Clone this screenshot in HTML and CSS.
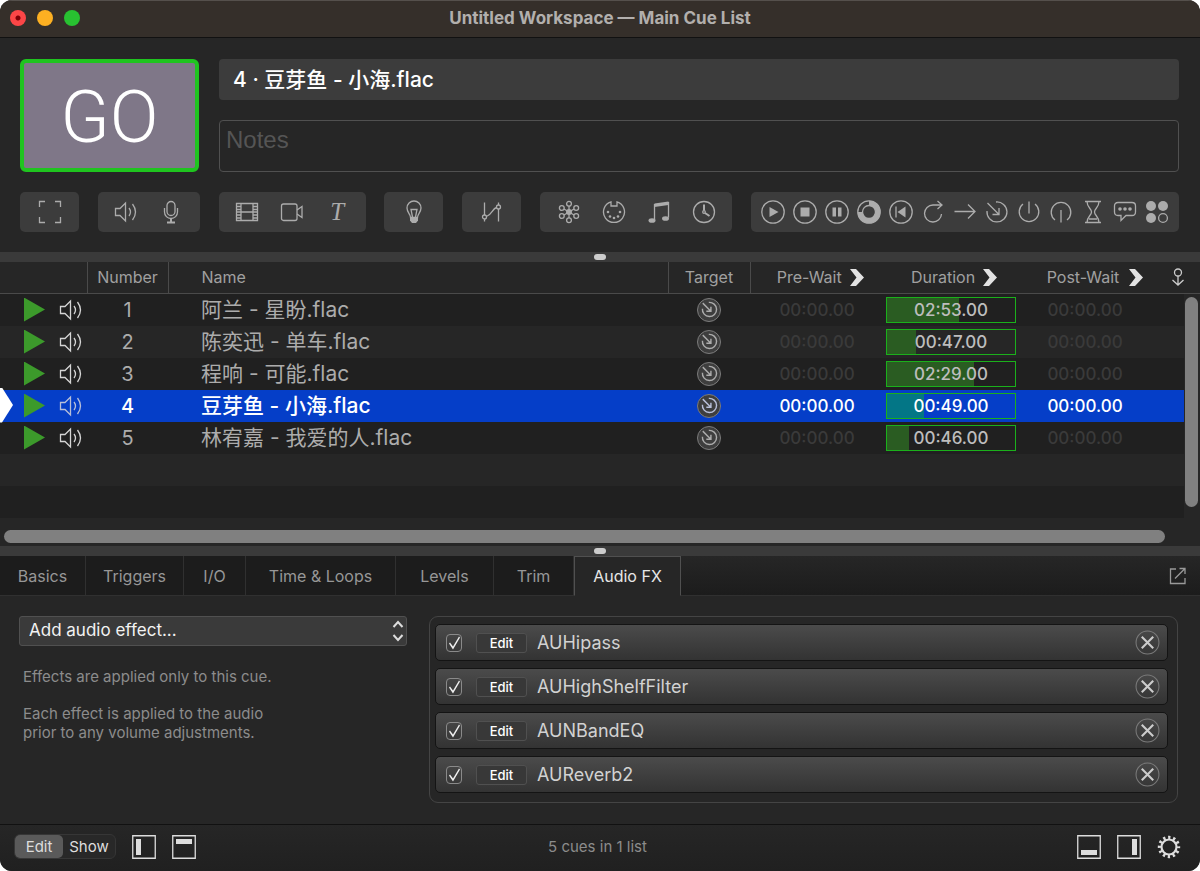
FILE: index.html
```html
<!DOCTYPE html>
<html lang="en">

<head>
    <meta charset="UTF-8">
    <meta name="viewport" content="width=device-width, initial-scale=1.0">
    <title>Untitled Workspace — Main Cue List</title>
    <link rel="stylesheet" href="styles.css">
</head>

<body>
    <!-- Icon sprite -->
    <svg class="sprite" aria-hidden="true">
        <symbol id="i-full" viewBox="0 0 24 24">
            <path d="M1.5 7V1.5H7M17 1.5h5.500V7M22.500 17v5.500H17M7 22.500H1.500V17" />
        </symbol>
        <symbol id="i-speaker" viewBox="0 0 24 24">
            <path d="M1.500 8.500H6L11.500 3v18L6 15.500H1.500zM15 8q3 4 0 8M18.500 4q6 8 0 16" />
        </symbol>
        <symbol id="i-mic" viewBox="0 0 24 24">
            <rect x="8" y="1.500" width="8" height="14" rx="4" />
            <path d="M5.500 8v4a6.500 6.500 0 0 0 13 0V8" />
            <path d="M12 18.500v3M8 22.500h8" stroke-width="2" />
        </symbol>
        <symbol id="i-film" viewBox="0 0 24 24">
            <path d="M1.500 3.500h21v17h-21zM6 3.500v17M18 3.500v17M6 12h12" />
            <path d="M1.500 6.500H6M1.500 9.500H6M1.500 12H6M1.500 15H6M1.500 18H6M18 6.500h4.500M18 9.500h4.500M18 12h4.500M18 15h4.500M18 18h4.500" />
        </symbol>
        <symbol id="i-camera" viewBox="0 0 24 24">
            <rect x="1.500" y="4" width="15.500" height="16.500" rx="2" />
            <path d="M17 10l5-3.500v11L17 14" />
        </symbol>
        <symbol id="i-bulb" viewBox="0 0 24 24">
            <path d="M8.500 17.500C8.500 14 5 12.500 5 8a7 7 0 0 1 14 0c0 4.500-3.500 6-3.500 9.500zM10.500 17L9 9.500h6L13.500 17" />
            <path class="solid" d="M8 17.500h8v3L14 23h-4l-2-2.500z" />
        </symbol>
        <symbol id="i-fade" viewBox="0 0 24 24">
            <path d="M4.500 2.500v12.500M4.500 19v2.500M18.500 2.500v2.500M18.500 9v12.500M6.500 16.500c5-1.500 6-8 10-9" />
            <circle cx="4.500" cy="17" r="2" />
            <circle cx="18.500" cy="7" r="2" />
        </symbol>
        <symbol id="i-network" viewBox="0 0 24 24">
            <circle class="solid" cx="12" cy="12" r="3" />
            <path d="M12 6v12M7 9l10 6M7 15l10-6" />
            <circle cx="12" cy="3.800" r="2.400" />
            <circle cx="12" cy="20.200" r="2.400" />
            <circle cx="4.800" cy="8" r="2.400" />
            <circle cx="19.200" cy="8" r="2.400" />
            <circle cx="4.800" cy="16" r="2.400" />
            <circle cx="19.200" cy="16" r="2.400" />
        </symbol>
        <symbol id="i-midi" viewBox="0 0 24 24">
            <path d="M9 1.900a10.500 10.500 0 1 0 6 0V6H9z" />
            <g class="solid">
                <circle cx="6" cy="12" r="1.300" />
                <circle cx="18" cy="12" r="1.300" />
                <circle cx="8" cy="16.500" r="1.300" />
                <circle cx="16" cy="16.500" r="1.300" />
                <circle cx="12" cy="18" r="1.300" />
            </g>
        </symbol>
        <symbol id="i-music" viewBox="0 0 24 24">
            <path class="solid" d="M7.500 3.500l14-2v3.500l-14 2z" />
            <path d="M7.500 4v16M21.500 2v15.500" />
            <ellipse class="solid" cx="5" cy="20.500" rx="3.500" ry="2.300" />
            <ellipse class="solid" cx="18.500" cy="18.500" rx="3.500" ry="2.300" />
        </symbol>
        <symbol id="i-clock" viewBox="0 0 24 24">
            <circle cx="12" cy="12" r="10.500" />
            <circle cx="12" cy="12" r="1.300" />
            <path d="M12 4.500v6M13 13l4.500 3" stroke-width="2" />
        </symbol>
        <symbol id="i-play" viewBox="0 0 24 24">
            <circle cx="12" cy="12" r="11.200" />
            <path class="solid" d="M8.500 7l9 5-9 5z" />
        </symbol>
        <symbol id="i-stop" viewBox="0 0 24 24">
            <circle cx="12" cy="12" r="11.200" />
            <path class="solid" d="M7.500 7.500h9v9h-9z" />
        </symbol>
        <symbol id="i-pause" viewBox="0 0 24 24">
            <circle cx="12" cy="12" r="11.200" />
            <path class="solid" d="M7.500 7.500h3.500v9H7.500zM13 7.500h3.500v9H13z" />
        </symbol>
        <symbol id="i-load" viewBox="0 0 24 24">
            <circle cx="12" cy="12" r="11.200" />
            <circle cx="12" cy="12" r="6.500" />
            <path d="M12 3.200A8.800 8.800 0 1 1 3.200 12" stroke-width="5" />
        </symbol>
        <symbol id="i-prev" viewBox="0 0 24 24">
            <circle cx="12" cy="12" r="11.200" />
            <path d="M7 6.500v11" />
            <path class="solid" d="M8.500 12l8-5.500v11z" />
        </symbol>
        <symbol id="i-reset" viewBox="0 0 24 24">
            <path d="M20.500 14a8.500 8.500 0 1 1-8.500-9h9M16.500 1l4.500 4-4.500 4" />
        </symbol>
        <symbol id="i-arrow" viewBox="0 0 24 24">
            <path d="M1.500 11.500h20.500M15 4.500l7 7-7 7" />
        </symbol>
        <symbol id="i-target" viewBox="0 0 24 24">
            <path d="M11 2a10 10 0 1 1-9 9M2.500 3l11 11M14 8v6.500H7.500" />
        </symbol>
        <symbol id="i-power" viewBox="0 0 24 24">
            <path d="M6 4a9.800 9.800 0 1 0 12 0M12 1.500v12" />
        </symbol>
        <symbol id="i-disarm" viewBox="0 0 24 24">
            <path d="M6 20A9.800 9.800 0 1 1 18 20M12 10v12.500" />
        </symbol>
        <symbol id="i-wait" viewBox="0 0 24 24">
            <path d="M4 1.500h16M4 22.500h16M6 1.500c0 6 4.500 7 4.500 10.500S6 16.500 6 22.500M18 1.500c0 6-4.500 7-4.500 10.500s4.500 4.500 4.500 10.500M8 19h8" />
        </symbol>
        <symbol id="i-memo" viewBox="0 0 24 24">
            <path d="M5 2.500h14q3.500 0 3.500 3.500v6q0 3.500-3.500 3.500h-6l-5 5v-5H5q-3.500 0-3.500-3.500V6q0-3.500 3.500-3.500z" />
            <g class="solid">
                <circle cx="7" cy="9" r="1.800" />
                <circle cx="12" cy="9" r="1.800" />
                <circle cx="17" cy="9" r="1.800" />
            </g>
        </symbol>
        <symbol id="i-cart" viewBox="0 0 24 24">
            <g class="solid">
                <circle cx="6" cy="6" r="5" />
                <circle cx="18" cy="6" r="5" />
                <circle cx="6" cy="18" r="5" />
            </g>
            <circle cx="18" cy="18" r="4.400" />
        </symbol>
        <symbol id="i-chevron" viewBox="0 0 14 17">
            <path class="solid" d="M0 0h6l8 8.500L6 17H0l6.500-8.500z" />
        </symbol>
        <symbol id="i-continue" viewBox="0 0 14 18">
            <circle cx="7" cy="4.500" r="3.500" />
            <path d="M7 8v9M1.500 12L7 17l5.500-5" />
        </symbol>
        <symbol id="i-popout" viewBox="0 0 18 18">
            <path d="M7 2H1.500v14.500H16V11M10.500 1.500H16V7M16 1.500L6 11.500" />
        </symbol>
        <symbol id="i-left" viewBox="0 0 24 24">
            <path d="M.75.75h22.500v22.500H.75z" />
            <path class="solid" d="M4 4h5v16H4z" />
        </symbol>
        <symbol id="i-top" viewBox="0 0 24 24">
            <path d="M.75.75h22.500v22.500H.75z" />
            <path class="solid" d="M4 4h16v5H4z" />
        </symbol>
        <symbol id="i-bottom" viewBox="0 0 24 24">
            <path d="M.75.75h22.500v22.500H.75z" />
            <path class="solid" d="M4 15h16v5H4z" />
        </symbol>
        <symbol id="i-right" viewBox="0 0 24 24">
            <path d="M.75.75h22.500v22.500H.75z" />
            <path class="solid" d="M15 4h5v16h-5z" />
        </symbol>
        <symbol id="i-gear" viewBox="0 0 24 24">
            <circle cx="12" cy="12" r="7.500" stroke-width="2.200" />
            <circle cx="12" cy="12" r="9.500" stroke-width="3.400" stroke-dasharray="2.300 2.674" stroke-dashoffset="1.150" />
        </symbol>
    </svg>

    <div class="window">
        <header class="titlebar">
            <div class="lights">
                <button class="light close" aria-label="Close"></button>
                <button class="light minimize" aria-label="Minimize"></button>
                <button class="light maximize" aria-label="Zoom"></button>
            </div>
            <h1>Untitled Workspace — Main Cue List</h1>
        </header>

        <section class="top">
            <div class="standby">
                <button class="go">GO</button>
                <div class="cue-info">
                    <input class="cue-name" type="text" aria-label="Cue name" value="4 · 豆芽鱼 - 小海.flac">
                    <textarea class="notes" aria-label="Notes" placeholder="Notes"></textarea>
                </div>
            </div>
            <div class="toolbar">
                <div class="group">
                    <button aria-label="Group"><svg class="icon"><use href="#i-full" /></svg></button>
                </div>
                <div class="group">
                    <button aria-label="Audio"><svg class="icon"><use href="#i-speaker" /></svg></button>
                    <button aria-label="Mic"><svg class="icon"><use href="#i-mic" /></svg></button>
                </div>
                <div class="group">
                    <button aria-label="Video"><svg class="icon"><use href="#i-film" /></svg></button>
                    <button aria-label="Camera"><svg class="icon"><use href="#i-camera" /></svg></button>
                    <button class="glyph">T</button>
                </div>
                <div class="group">
                    <button aria-label="Light"><svg class="icon"><use href="#i-bulb" /></svg></button>
                </div>
                <div class="group">
                    <button aria-label="Fade"><svg class="icon"><use href="#i-fade" /></svg></button>
                </div>
                <div class="group">
                    <button aria-label="Network"><svg class="icon"><use href="#i-network" /></svg></button>
                    <button aria-label="MIDI"><svg class="icon"><use href="#i-midi" /></svg></button>
                    <button aria-label="MIDI file"><svg class="icon"><use href="#i-music" /></svg></button>
                    <button aria-label="Timecode"><svg class="icon"><use href="#i-clock" /></svg></button>
                </div>
                <div class="group tight">
                    <button aria-label="Start"><svg class="icon"><use href="#i-play" /></svg></button>
                    <button aria-label="Stop"><svg class="icon"><use href="#i-stop" /></svg></button>
                    <button aria-label="Pause"><svg class="icon"><use href="#i-pause" /></svg></button>
                    <button aria-label="Load"><svg class="icon"><use href="#i-load" /></svg></button>
                    <button aria-label="Reset"><svg class="icon"><use href="#i-prev" /></svg></button>
                    <button aria-label="Devamp"><svg class="icon"><use href="#i-reset" /></svg></button>
                    <button aria-label="Go to"><svg class="icon"><use href="#i-arrow" /></svg></button>
                    <button aria-label="Target"><svg class="icon"><use href="#i-target" /></svg></button>
                    <button aria-label="Arm"><svg class="icon"><use href="#i-power" /></svg></button>
                    <button aria-label="Disarm"><svg class="icon"><use href="#i-disarm" /></svg></button>
                    <button aria-label="Wait"><svg class="icon"><use href="#i-wait" /></svg></button>
                    <button aria-label="Memo"><svg class="icon"><use href="#i-memo" /></svg></button>
                    <button aria-label="Cart"><svg class="icon"><use href="#i-cart" /></svg></button>
                </div>
            </div>
        </section>

        <div class="splitter"><span class="grip"></span></div>

        <section class="list">
            <table class="cues">
                <colgroup>
                    <col class="col-status">
                    <col class="col-number">
                    <col>
                    <col class="col-target">
                    <col class="col-time">
                    <col class="col-time">
                    <col class="col-time">
                    <col class="col-continue">
                </colgroup>
                <thead>
                    <tr>
                        <th class="line"></th>
                        <th class="line">Number</th>
                        <th class="line name">Name</th>
                        <th class="line">Target</th>
                        <th><span class="head pre">Pre-Wait <svg class="chevron"><use href="#i-chevron" /></svg></span></th>
                        <th><span class="head dur">Duration <svg class="chevron"><use href="#i-chevron" /></svg></span></th>
                        <th><span class="head post">Post-Wait <svg class="chevron"><use href="#i-chevron" /></svg></span></th>
                        <th class="last"><svg class="continue"><use href="#i-continue" /></svg></th>
                    </tr>
                </thead>
                <tbody>
                    <tr>
                        <td><div class="status"><span class="triangle"></span><svg class="icon"><use href="#i-speaker" /></svg></div></td>
                        <td>1</td>
                        <td class="name">阿兰 - 星盼.flac</td>
                        <td><span class="target"><svg class="icon"><use href="#i-target" /></svg></span></td>
                        <td class="time dim">00:00.00</td>
                        <td class="time"><div class="duration"><span class="fill" style="width: 56%"></span><span class="value">02:53.00</span></div></td>
                        <td class="time dim">00:00.00</td>
                        <td></td>
                    </tr>
                    <tr>
                        <td><div class="status"><span class="triangle"></span><svg class="icon"><use href="#i-speaker" /></svg></div></td>
                        <td>2</td>
                        <td class="name">陈奕迅 - 单车.flac</td>
                        <td><span class="target"><svg class="icon"><use href="#i-target" /></svg></span></td>
                        <td class="time dim">00:00.00</td>
                        <td class="time"><div class="duration"><span class="fill" style="width: 23%"></span><span class="value">00:47.00</span></div></td>
                        <td class="time dim">00:00.00</td>
                        <td></td>
                    </tr>
                    <tr>
                        <td><div class="status"><span class="triangle"></span><svg class="icon"><use href="#i-speaker" /></svg></div></td>
                        <td>3</td>
                        <td class="name">程响 - 可能.flac</td>
                        <td><span class="target"><svg class="icon"><use href="#i-target" /></svg></span></td>
                        <td class="time dim">00:00.00</td>
                        <td class="time"><div class="duration"><span class="fill" style="width: 68%"></span><span class="value">02:29.00</span></div></td>
                        <td class="time dim">00:00.00</td>
                        <td></td>
                    </tr>
                    <tr class="selected">
                        <td><div class="status"><span class="playhead"></span><span class="triangle"></span><svg class="icon"><use href="#i-speaker" /></svg></div></td>
                        <td>4</td>
                        <td class="name">豆芽鱼 - 小海.flac</td>
                        <td><span class="target"><svg class="icon"><use href="#i-target" /></svg></span></td>
                        <td class="time dim">00:00.00</td>
                        <td class="time"><div class="duration"><span class="fill" style="width: 29%"></span><span class="value">00:49.00</span></div></td>
                        <td class="time dim">00:00.00</td>
                        <td></td>
                    </tr>
                    <tr>
                        <td><div class="status"><span class="triangle"></span><svg class="icon"><use href="#i-speaker" /></svg></div></td>
                        <td>5</td>
                        <td class="name">林宥嘉 - 我爱的人.flac</td>
                        <td><span class="target"><svg class="icon"><use href="#i-target" /></svg></span></td>
                        <td class="time dim">00:00.00</td>
                        <td class="time"><div class="duration"><span class="fill" style="width: 17%"></span><span class="value">00:46.00</span></div></td>
                        <td class="time dim">00:00.00</td>
                        <td></td>
                    </tr>
                </tbody>
            </table>
            <div class="scroll-y"><span class="thumb"></span></div>
            <div class="scroll-x"><span class="thumb"></span></div>
        </section>

        <div class="splitter"><span class="grip"></span></div>

        <nav class="tabs" role="tablist">
            <button role="tab">Basics</button>
            <button role="tab">Triggers</button>
            <button role="tab">I/O</button>
            <button role="tab">Time &amp; Loops</button>
            <button role="tab">Levels</button>
            <button role="tab">Trim</button>
            <button role="tab" class="active" aria-selected="true">Audio FX</button>
            <div class="tabs-rest">
                <button class="popout" aria-label="Open inspector in window"><svg><use href="#i-popout" /></svg></button>
            </div>
        </nav>

        <section class="inspector">
            <div class="fx-side">
                <div class="select-wrap">
                    <select aria-label="Add audio effect">
                        <option>Add audio effect...</option>
                    </select>
                    <svg class="updown" viewBox="0 0 12 22"><path d="M1.500 7L6 2l4.500 5M1.500 15L6 20l4.500-5" /></svg>
                </div>
                <p>Effects are applied only to this cue.</p>
                <p>Each effect is applied to the audio<br>prior to any volume adjustments.</p>
            </div>
            <div class="fx-list">
                <div class="fx">
                    <input type="checkbox" id="fx1" checked>
                    <button class="edit">Edit</button>
                    <label for="fx1">AUHipass</label>
                    <button class="remove" aria-label="Remove AUHipass"><svg viewBox="0 0 24 24"><circle cx="12" cy="12" r="11" /><path d="M6.500 6.500l11 11M17.500 6.500l-11 11" /></svg></button>
                </div>
                <div class="fx">
                    <input type="checkbox" id="fx2" checked>
                    <button class="edit">Edit</button>
                    <label for="fx2">AUHighShelfFilter</label>
                    <button class="remove" aria-label="Remove AUHighShelfFilter"><svg viewBox="0 0 24 24"><circle cx="12" cy="12" r="11" /><path d="M6.500 6.500l11 11M17.500 6.500l-11 11" /></svg></button>
                </div>
                <div class="fx">
                    <input type="checkbox" id="fx3" checked>
                    <button class="edit">Edit</button>
                    <label for="fx3">AUNBandEQ</label>
                    <button class="remove" aria-label="Remove AUNBandEQ"><svg viewBox="0 0 24 24"><circle cx="12" cy="12" r="11" /><path d="M6.500 6.500l11 11M17.500 6.500l-11 11" /></svg></button>
                </div>
                <div class="fx">
                    <input type="checkbox" id="fx4" checked>
                    <button class="edit">Edit</button>
                    <label for="fx4">AUReverb2</label>
                    <button class="remove" aria-label="Remove AUReverb2"><svg viewBox="0 0 24 24"><circle cx="12" cy="12" r="11" /><path d="M6.500 6.500l11 11M17.500 6.500l-11 11" /></svg></button>
                </div>
            </div>
        </section>

        <footer class="footer">
            <div class="footer-left">
                <div class="mode">
                    <button class="on">Edit</button>
                    <button>Show</button>
                </div>
                <button class="pane" aria-label="Toggle left pane"><svg class="icon"><use href="#i-left" /></svg></button>
                <button class="pane" aria-label="Toggle top pane"><svg class="icon"><use href="#i-top" /></svg></button>
            </div>
            <span class="count">5 cues in 1 list</span>
            <div class="footer-right">
                <button class="pane" aria-label="Toggle inspector"><svg class="icon"><use href="#i-bottom" /></svg></button>
                <button class="pane" aria-label="Toggle sidebar"><svg class="icon"><use href="#i-right" /></svg></button>
                <button class="pane" aria-label="Settings"><svg class="icon"><use href="#i-gear" /></svg></button>
            </div>
        </footer>
    </div>
</body>

</html>
```

FILE: styles.css
```css
* {
    box-sizing: border-box;
    margin: 0;
    padding: 0;
}

body {
    background: #fff;
    color: #acacac;
    font-family: Inter, "Noto Sans CJK SC", sans-serif;
    font-size: 16px;
}

button,
input,
select,
textarea {
    font: inherit;
    color: inherit;
    border: none;
    background: none;
}

svg {
    display: block;
    fill: none;
    stroke: currentColor;
    stroke-width: 1.3;
}

.sprite {
    position: absolute;
    width: 0;
    height: 0;
}

.solid {
    fill: currentColor;
    stroke: none;
}

.icon {
    width: 24px;
    height: 24px;
}

.window {
    display: flex;
    flex-direction: column;
    min-height: 100vh;
    background: #262626;
    border-radius: 12px;
    overflow: hidden;
}

/* Title bar */
.titlebar {
    display: grid;
    grid-template-columns: 1fr auto 1fr;
    align-items: center;
    height: 38px;
    padding: 0 10px 2px;
    background: #352f2a;
    border-top: 1px solid #55504c;
    border-bottom: 1px solid #111;
}

.titlebar h1 {
    font-size: 17px;
    font-weight: 700;
    color: #b2afad;
}

.lights {
    display: flex;
    gap: 11px;
}

.light {
    width: 16px;
    height: 16px;
    border-radius: 50%;
}

.close {
    background: radial-gradient(circle, #7d0006 0 2px, #fc4647 3px);
}

.minimize {
    background: #fdb022;
}

.maximize {
    background: #28c131;
}

/* Standby cue and toolbar */
.top {
    padding: 21px 21px 20px 20px;
}

.standby {
    display: flex;
    gap: 20px;
}

.go {
    width: 179px;
    height: 113px;
    padding-top: 4px;
    border: 4px solid #1fc41f;
    border-radius: 6px;
    background: #7f7788;
    color: #fff;
    font-family: Roboto, sans-serif;
    font-size: 72px;
    font-weight: 350;
}

.cue-info {
    flex: 1;
    display: flex;
    flex-direction: column;
    gap: 20px;
}

.cue-name {
    height: 41px;
    padding: 0 14px 3px;
    border-radius: 4px;
    background: #3c3c3c;
    color: #fff;
    font-size: 21px;
    font-weight: 500;
}

.notes {
    height: 52px;
    padding: 5px 6px;
    border: 1px solid #505050;
    border-radius: 4px;
    font-family: "Liberation Sans", sans-serif;
    font-size: 24px;
    resize: none;
}

.notes::placeholder {
    color: #555;
}

.toolbar {
    display: flex;
    justify-content: space-between;
    margin-top: 20px;
}

.group {
    display: flex;
    justify-content: center;
    min-width: 59px;
    height: 40px;
    padding: 0 6px;
    border-radius: 5px;
    background: #3c3c3c;
}

.group button {
    display: flex;
    align-items: center;
    justify-content: center;
    width: 45px;
}

.group .glyph {
    font: italic 25px "Liberation Serif", serif;
}

.tight button {
    width: 32px;
}

/* Splitters */
.splitter {
    display: flex;
    align-items: center;
    justify-content: center;
    height: 10px;
    background: #3a3a3a;
}

.grip {
    width: 12px;
    height: 6px;
    border-radius: 3px;
    background: #ccc;
}

/* Cue list */
.list {
    position: relative;
    flex: 1;
    background: repeating-linear-gradient(#262626 0 32px, #202020 32px 64px);
}

.cues {
    width: 100%;
    table-layout: fixed;
    border-collapse: collapse;
}

.col-status {
    width: 87px;
}

.col-number {
    width: 81px;
}

.col-target {
    width: 82px;
}

.col-time {
    width: 134px;
}

.col-continue {
    width: 48px;
}

.cues th {
    height: 31px;
    border-bottom: 1px solid #4a4a4a;
    font-weight: 400;
    color: #a0a0a0;
}

.cues .line {
    border-right: 1px solid #4a4a4a;
}

.cues td {
    height: 32px;
    text-align: center;
    font-size: 20px;
}

.cues .name {
    padding-left: 33px;
    text-align: left;
}

.cues td.name {
    font-size: 21px;
    line-height: 32px;
}

.head {
    display: flex;
    align-items: center;
    justify-content: center;
    gap: 8px;
}

.pre,
.dur {
    padding-left: 6px;
}

.post {
    gap: 10px;
    padding-left: 20px;
}

.chevron {
    width: 14px;
    height: 17px;
    color: #e2e2e2;
}

.cues .last {
    padding-left: 4px;
}

.continue {
    width: 14px;
    height: 18px;
    margin: 0 auto;
    color: #ccc;
}

.status {
    position: relative;
    display: flex;
    align-items: center;
    gap: 14px;
    height: 32px;
    padding-left: 24px;
}

.status .icon {
    color: #d5d5d5;
}

.triangle {
    width: 21px;
    height: 24px;
    background: #3c9a2b;
    clip-path: polygon(0 0, 100% 50%, 0 100%);
}

.playhead {
    position: absolute;
    left: 0;
    top: -2px;
    width: 13px;
    height: 35px;
    background: #fff;
    clip-path: polygon(0 0, 2px 0, 100% 50%, 2px 100%, 0 100%);
}

.target {
    display: flex;
    align-items: center;
    justify-content: center;
    width: 24px;
    height: 24px;
    margin: 0 auto;
    border: 1px solid #7c7c7c;
    border-radius: 50%;
    background: #3e3e3e;
}

.target .icon {
    width: 17px;
    height: 17px;
    stroke-width: 2;
}

.cues .time {
    font-size: 17px;
    font-weight: 500;
}

.cues .dim {
    color: #3a3a3a;
}

.duration {
    position: relative;
    height: 26px;
    margin: 0 2px;
    border: 1px solid #1bb01b;
    line-height: 24px;
}

.fill {
    position: absolute;
    left: 0;
    top: 0;
    bottom: 0;
    background: #2a5c22;
}

.value {
    position: relative;
    color: #bdbdbd;
}

.selected {
    background: #053ec8;
}

.cues .selected td,
.selected .value {
    color: #fff;
    font-weight: 500;
}

.selected .fill {
    background: #037686;
}

.selected .icon {
    color: #b8bfd8;
}

.scroll-y {
    position: absolute;
    top: 32px;
    right: 0;
    bottom: 0;
    width: 16px;
    padding: 3px 2px 39px 1px;
    background: #262626;
}

.scroll-x {
    position: absolute;
    left: 0;
    right: 16px;
    bottom: 0;
    height: 16px;
    padding: 0 19px 3px 4px;
}

.thumb {
    display: block;
    height: 100%;
    border-radius: 7px;
    background: #808080;
}

/* Inspector tabs */
.tabs {
    display: grid;
    grid-template-columns: 86px 98px 62px 150px 98px 80px 107px 1fr;
    height: 40px;
}

.tabs > button {
    background: #1c1c1c;
    border-right: 1px solid #303030;
    border-bottom: 1px solid #303030;
    color: #979797;
}

.tabs > .active {
    border: 1px solid #505050;
    border-bottom-color: #262626;
    background: #262626;
    color: #e6e6e6;
}

.tabs-rest {
    display: flex;
    align-items: center;
    justify-content: flex-end;
    padding-right: 13px;
    border-bottom: 1px solid #303030;
    background: linear-gradient(#262626, #1c1c1c);
}

.popout svg {
    width: 18px;
    height: 18px;
    color: #999;
}

/* Audio FX */
.inspector {
    display: grid;
    grid-template-columns: 388px 1fr;
    gap: 22px;
    padding: 20px 22px 21px 19px;
}

.select-wrap {
    position: relative;
}

.select-wrap select {
    appearance: none;
    width: 100%;
    height: 30px;
    padding: 0 9px 2px;
    border: 1px solid #505050;
    border-radius: 3px;
    background: #3a3a3a;
    color: #f2f2f2;
    font-size: 17px;
}

.updown {
    position: absolute;
    right: 3px;
    top: 4px;
    width: 12px;
    height: 22px;
    color: #ddd;
    stroke-width: 2;
    pointer-events: none;
}

.fx-side p {
    margin: 18px 4px 0;
    font-size: 15px;
    line-height: 19px;
    color: #8c8c8c;
}

.fx-side .select-wrap + p {
    margin-top: 21px;
}

.fx-list {
    display: flex;
    flex-direction: column;
    gap: 7px;
    padding: 7px 9px 9px 5px;
    border: 1px solid #444;
    border-radius: 9px;
}

.fx {
    display: flex;
    align-items: center;
    height: 37px;
    padding: 0 7px 0 10px;
    border: 1px solid #141414;
    border-radius: 5px;
    background: linear-gradient(#4b4b4b, #333);
}

.fx input {
    appearance: none;
    width: 16px;
    height: 18px;
    border: 1px solid #8a8a8a;
    border-radius: 4px;
}

.fx input:checked::before {
    content: "";
    display: block;
    width: 14px;
    height: 16px;
    background: #eee;
    clip-path: polygon(2px 9px, 3px 8px, 6px 12px, 12px 2px, 13px 3px, 6px 15px);
}

.edit {
    width: 51px;
    height: 20px;
    margin: 0 10px 0 14px;
    border: 1px solid #505050;
    border-radius: 3px;
    background: #383838;
    color: #fff;
    font-size: 13px;
    font-weight: 500;
}

.fx label {
    flex: 1;
    font-size: 18px;
    color: #d2d2d2;
}

.remove svg {
    width: 25px;
    height: 25px;
    color: #ccc;
    stroke-width: 2;
}

.remove circle {
    stroke: #7a7a7a;
    stroke-width: 1;
}

/* Footer */
.footer {
    display: grid;
    grid-template-columns: 1fr auto 1fr;
    align-items: center;
    height: 47px;
    padding: 0 19px 3px 14px;
    border-top: 1px solid #111;
    background: linear-gradient(#262626, #202020);
}

.footer-left,
.footer-right {
    display: flex;
    align-items: center;
    gap: 16px;
}

.footer-right {
    justify-content: flex-end;
}

.mode {
    display: flex;
    height: 25px;
    border: 1px solid #363636;
    border-radius: 6px;
    background: #282828;
}

.mode button {
    width: 52px;
    font-size: 15px;
    color: #ddd;
}

.mode .on {
    width: 48px;
    border-radius: 5px;
    background: #5a5a5a;
}

.pane {
    color: #ddd;
}

.count {
    font-size: 15px;
    color: #8c8c8c;
}
```
